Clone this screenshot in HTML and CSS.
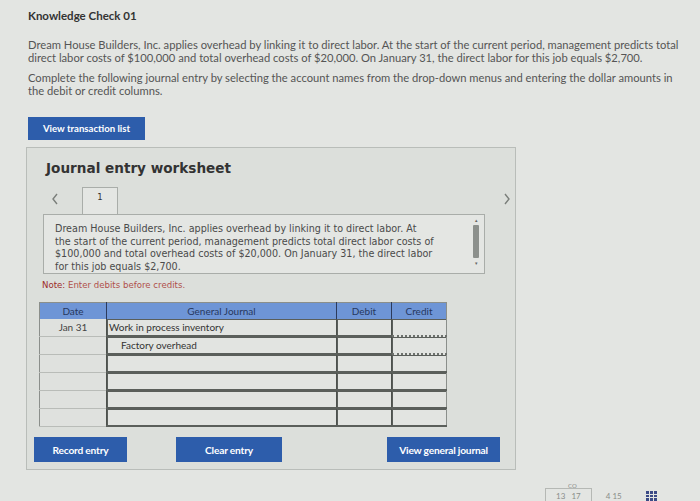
FILE: index.html
```html
<!DOCTYPE html>
<html lang="en">
<head>
  <meta charset="UTF-8" />
  <meta name="viewport" content="width=device-width, initial-scale=1.0"/>
  <title>Knowledge Check 01</title>
  <link rel="stylesheet" href="styles.css">
</head>
<body>

  <div class="page">
    <h1 class="kc-title">Knowledge Check 01</h1>
    <p class="intro">Dream House Builders, Inc. applies overhead by linking it to direct labor. At the start of the current period, management predicts total direct labor costs of $100,000 and total overhead costs of $20,000. On January 31, the direct labor for this job equals $2,700.</p>
    <p class="intro">Complete the following journal entry by selecting the account names from the drop-down menus and entering the dollar amounts in the debit or credit columns.</p>

    <button class="btn btn-list">View transaction list</button>

    <section class="worksheet">
      <h2>Journal entry worksheet</h2>

      <div class="tabs">
        <svg class="arrow" width="8" height="12" viewBox="0 0 8 12"><path d="M6 1 L2 6 L6 11" fill="none" stroke="#7a7e7a" stroke-width="1.4"/></svg>
        <div class="tab">1</div>
        <svg class="arrow arrow-next" width="8" height="12" viewBox="0 0 8 12"><path d="M2 1 L6 6 L2 11" fill="none" stroke="#7a7e7a" stroke-width="1.4"/></svg>
      </div>

      <div class="prompt">
        <p>Dream House Builders, Inc. applies overhead by linking it to direct labor. At<br>the start of the current period, management predicts total direct labor costs of<br>$100,000 and total overhead costs of $20,000. On January 31, the direct labor<br>for this job equals $2,700.</p>
        <div class="scrollbar">
          <span class="caret">&#9652;</span>
          <span class="thumb"></span>
          <span class="caret">&#9662;</span>
        </div>
      </div>

      <p class="note"><b>Note:</b> Enter debits before credits.</p>

      <table class="journal">
        <thead>
          <tr><th class="c-date">Date</th><th>General Journal</th><th class="c-amt">Debit</th><th class="c-amt">Credit</th></tr>
        </thead>
        <tbody>
          <tr><td class="c-date">Jan 31</td><td class="field">Work in process inventory</td><td class="field"></td><td class="field dotted"></td></tr>
          <tr><td class="c-date"></td><td class="field indent">Factory overhead</td><td class="field"></td><td class="field dotted"></td></tr>
          <tr><td class="c-date"></td><td class="field"></td><td class="field"></td><td class="field"></td></tr>
          <tr><td class="c-date"></td><td class="field"></td><td class="field"></td><td class="field"></td></tr>
          <tr><td class="c-date"></td><td class="field"></td><td class="field"></td><td class="field"></td></tr>
          <tr><td class="c-date"></td><td class="field"></td><td class="field"></td><td class="field"></td></tr>
        </tbody>
      </table>

      <div class="actions">
        <button class="btn btn-record">Record entry</button>
        <button class="btn btn-clear">Clear entry</button>
        <button class="btn btn-view">View general journal</button>
      </div>
    </section>

    <!-- footer controls, mostly cut off at the bottom edge -->
    <div class="tray">
      <span class="tray-box"><span class="tray-tag">CO</span>13&nbsp;&nbsp;&nbsp;17</span>
      <span class="tray-num">4 15</span>
      <span class="tray-grid"></span>
    </div>
  </div>

</body>
</html>
```

FILE: styles.css
```css
body {
  margin: 0;
  padding: 0;
  background: #e3e5e2;
  font-family: Lato, "Liberation Sans", sans-serif;
  color: #444;
  overflow: hidden;
}

.page {
  width: 700px;
  height: 501px;
  padding: 9px 0 0 28px;
  box-sizing: border-box;
  position: relative;
}

.kc-title {
  margin: 0;
  font-size: 11.5px;
  font-weight: bold;
  color: #333;
  line-height: 14px;
}

.intro {
  margin: 16px 0 0;
  width: 660px;
  font-size: 11.2px;
  line-height: 12.5px;
  color: #555;
}

.intro + .intro {
  margin-top: 8px;
}

.btn {
  border: none;
  background: #2d5dab;
  color: #fff;
  font-family: Lato, "Liberation Sans", sans-serif;
  font-weight: bold;
  padding: 0;
  cursor: pointer;
}

.btn-list {
  display: block;
  margin-top: 20px;
  width: 117px;
  height: 23px;
  font-size: 9.6px;
}

/* worksheet panel */
.worksheet {
  margin: 7px 0 0 -2px;
  width: 490px;
  height: 323px;
  box-sizing: border-box;
  border: 1px solid #b9bdb9;
  background: #dcdfdb;
  padding: 11px 0 0 0;
}

.worksheet h2 {
  margin: 0 0 0 19px;
  font-family: "DejaVu Sans", Verdana, sans-serif;
  font-size: 13.6px;
  font-weight: bold;
  color: #333;
  line-height: 18px;
}

.tabs {
  display: flex;
  align-items: flex-end;
  margin: 10px 0 0 16px;
  width: 442px;
  height: 27px;
}

.arrow {
  margin: 0 0 9px 8px;
}

.tab {
  margin-left: 23px;
  width: 36px;
  height: 27px;
  box-sizing: border-box;
  border: 1px solid #a9ada9;
  border-bottom: none;
  background: #e4e6e3;
  font-family: "DejaVu Sans", Verdana, sans-serif;
  font-size: 8.5px;
  color: #333;
  text-align: center;
  line-height: 19px;
}

.arrow-next {
  margin-left: auto;
  margin-right: -26px;
}

.prompt {
  display: flex;
  margin-left: 16px;
  width: 442px;
  height: 60px;
  box-sizing: border-box;
  border: 1px solid #a9ada9;
  background: #e4e6e3;
}

.prompt p {
  margin: 0;
  padding: 8px 0 0 11px;
  width: 400px;
  font-family: "DejaVu Sans", Verdana, sans-serif;
  font-size: 9.6px;
  line-height: 12.6px;
  color: #4a4a4a;
  white-space: nowrap;
}

.scrollbar {
  margin-left: auto;
  margin-right: 4px;
  width: 8px;
  display: flex;
  flex-direction: column;
  align-items: center;
  padding-top: 2px;
  font-size: 5px;
  color: #666;
}

.thumb {
  width: 6px;
  height: 33px;
  margin: 2px 0;
  background: #8c908c;
  border-radius: 1px;
}

.note {
  margin: 6px 0 0 15px;
  font-family: "DejaVu Sans", Verdana, sans-serif;
  font-size: 8.6px;
  color: #b0504b;
  line-height: 10px;
}

.note b {
  font-weight: normal;
  color: #9d2d2a;
}

/* journal grid */
.journal {
  margin: 12px 0 0 12px;
  width: 408px;
  border-collapse: collapse;
  font-family: Lato, "Liberation Sans", sans-serif;
  font-size: 10px;
  color: #333;
  border: 1px solid #8b8f8b;
}

.journal th {
  height: 16px;
  padding: 0;
  background: #6e95d6;
  color: #27385e;
  font-weight: normal;
  border-left: 1px solid #2c3b5c;
}

.journal th:first-child {
  border-left: none;
}

.journal .c-date {
  width: 66px;
}

.journal .c-amt {
  width: 54px;
}

.journal td {
  height: 16px;
  padding: 0;
  background: #e2e4e1;
  border-left: 1px solid #4d514d;
  border-bottom: 2px solid #5b5f5b;
}

.journal td.c-date {
  background: #dfe1de;
  text-align: center;
  border-left: none;
  border-bottom: 1px solid #b9bcb8;
  color: #444;
}

.journal td.field {
  padding-left: 2px;
  box-shadow: inset 1px 1px 0 #5a5e5a;
}

.journal td.indent {
  padding-left: 14px;
}

.journal td.dotted {
  border-bottom: 2px dotted #6d716d;
}

/* bottom buttons */
.actions {
  display: flex;
  align-items: center;
  margin: 10px 0 0 7px;
}

.actions .btn {
  height: 25px;
  font-size: 10.2px;
  letter-spacing: -0.2px;
}

.btn-record {
  width: 93px;
}

.btn-clear {
  width: 106px;
  margin-left: 49px;
}

.btn-view {
  width: 113px;
  margin-left: 105px;
}

/* partial footer */
.tray {
  position: absolute;
  left: 545px;
  bottom: 0;
  display: flex;
  align-items: flex-end;
  gap: 14px;
  font-size: 8px;
  color: #8a8e8a;
}

.tray-box {
  position: relative;
  padding: 2px 10px 0;
  border: 1px solid #b5b8b4;
  border-bottom: none;
  line-height: 10px;
}

.tray-tag {
  position: absolute;
  top: -8px;
  left: 22px;
  font-size: 6px;
}

.tray-num {
  line-height: 10px;
}

.tray-grid {
  width: 11px;
  height: 10px;
  margin-left: 10px;
  background:
    linear-gradient(90deg, transparent 3px, #e3e5e2 3px, #e3e5e2 4px, transparent 4px, transparent 7px, #e3e5e2 7px, #e3e5e2 8px, transparent 8px),
    linear-gradient(transparent 3px, #e3e5e2 3px, #e3e5e2 4px, transparent 4px, transparent 6px, #e3e5e2 6px, #e3e5e2 7px, transparent 7px),
    #3b4a86;
}
```
